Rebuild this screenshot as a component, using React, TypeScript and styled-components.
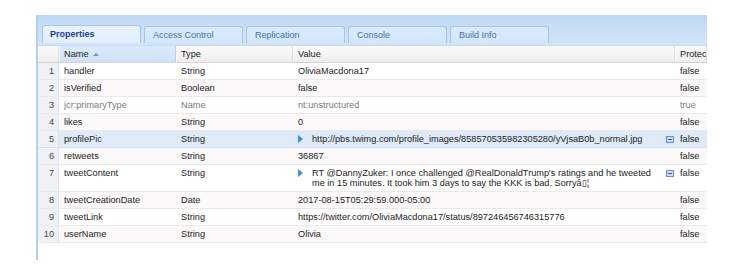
import React from 'react';
import styled, { createGlobalStyle, css } from 'styled-components';

const GlobalStyle = createGlobalStyle`
  html, body {
    margin: 0;
    padding: 0;
    background: #ffffff;
  }
  body {
    font-family: 'Liberation Sans', Arial, sans-serif;
  }
`;

const COLS = '21px 117px 117px 382px 1fr';

const Page = styled.div`
  padding: 15px 0 0 36px;
`;

const Panel = styled.div`
  width: 671px;
  height: 245px;
  border-left: 2px solid #b3cfef;
  box-sizing: border-box;
  overflow: hidden;
  display: flex;
  flex-direction: column;
`;

const TabStrip = styled.div`
  height: 31px;
  box-sizing: border-box;
  display: flex;
  align-items: flex-end;
  gap: 3px;
  padding: 0 0 2px 4px;
  background: linear-gradient(#bcd5f3 0, #c7dcf5 9px, #d3e4f8 100%);
  border-bottom: 1px solid #c6dcf6;
`;

const Tab = styled.div<{ $active?: boolean }>`
  width: 99px;
  height: 17px;
  box-sizing: border-box;
  padding-left: 8px;
  border: 1px solid #a3c4ec;
  border-bottom: none;
  border-radius: 3px 3px 0 0;
  background: linear-gradient(#dbebfc, #d3e6fb);
  color: #4571ac;
  font-size: 9px;
  line-height: 16px;
  white-space: nowrap;
  ${({ $active }) =>
    $active &&
    css`
      height: 18px;
      padding-left: 7px;
      background: linear-gradient(#eaf4fe, #e1eefd);
      color: #15428b;
      font-weight: bold;
      line-height: 17px;
    `}
`;

const Header = styled.div`
  display: grid;
  grid-template-columns: ${COLS};
  height: 17px;
  box-sizing: border-box;
  background: linear-gradient(#fbfbfb, #ededee);
  border-bottom: 1px solid #dccfcf;
`;

const HeadCell = styled.div<{ $sorted?: boolean }>`
  display: flex;
  align-items: center;
  gap: 4px;
  padding-left: 5px;
  border-right: 1px solid #dcdcdc;
  box-shadow: inset 1px 0 0 #ffffff;
  color: #222;
  font-size: 9.2px;
  white-space: nowrap;
  overflow: hidden;
  ${({ $sorted }) =>
    $sorted &&
    css`
      background: linear-gradient(#dcebfb, #cfe3f9);
      border-right-color: #b9d3f1;
    `}
`;

const SortArrow = styled.span`
  width: 0;
  height: 0;
  border-left: 3px solid transparent;
  border-right: 3px solid transparent;
  border-bottom: 3px solid #6f95c8;
`;

const Row = styled.div<{ $alt?: boolean; $selected?: boolean }>`
  display: grid;
  grid-template-columns: ${COLS};
  border-bottom: 1px solid #ebe8e8;
  background: ${({ $alt }) => ($alt ? '#faf8f8' : '#ffffff')};
  ${({ $selected }) =>
    $selected &&
    css`
      background: #dfeaf8;
      border-bottom-color: #d3e1f3;
    `}
`;

const NumCell = styled.div`
  padding: 3px 4px 3px 0;
  text-align: right;
  line-height: 10px;
  font-size: 9.2px;
  color: #444;
  background: #eef1f5;
  border-right: 1px solid #e0e4ea;
`;

const Cell = styled.div<{ $dim?: boolean }>`
  padding: 3px 4px 3px 5px;
  line-height: 10px;
  font-size: 9.2px;
  color: ${({ $dim }) => ($dim ? '#7a7a7a' : '#222')};
  white-space: nowrap;
  overflow: hidden;
`;

const ValueCell = styled(Cell)`
  display: flex;
  align-items: flex-start;
  padding-right: 1px;
  white-space: normal;
`;

const Expander = styled.span`
  flex: none;
  width: 0;
  height: 0;
  margin: 1px 9px 0 0;
  border-top: 4px solid transparent;
  border-bottom: 4px solid transparent;
  border-left: 5px solid #3a8fdc;
`;

const ValueText = styled.span`
  flex: 1;
`;

const Collapse = styled.svg`
  flex: none;
  margin: 2px 0 0 6px;
`;

type Prop = {
  name: string;
  type: string;
  value: string;
  prot: string;
  dim?: boolean;
  expand?: boolean;
  selected?: boolean;
};

const props: Prop[] = [
  { name: 'handler', type: 'String', value: 'OliviaMacdona17', prot: 'false' },
  { name: 'isVerified', type: 'Boolean', value: 'false', prot: 'false' },
  { name: 'jcr:primaryType', type: 'Name', value: 'nt:unstructured', prot: 'true', dim: true },
  { name: 'likes', type: 'String', value: '0', prot: 'false' },
  {
    name: 'profilePic',
    type: 'String',
    value: 'http://pbs.twimg.com/profile_images/858570535982305280/yVjsaB0b_normal.jpg',
    prot: 'false',
    expand: true,
    selected: true,
  },
  { name: 'retweets', type: 'String', value: '36867', prot: 'false' },
  {
    name: 'tweetContent',
    type: 'String',
    value:
      "RT @DannyZuker: I once challenged @RealDonaldTrump's ratings and he tweeted me in 15 minutes. It took him 3 days to say the KKK is bad. Sorry\u00e2\u25af\u00a6",
    prot: 'false',
    expand: true,
  },
  { name: 'tweetCreationDate', type: 'Date', value: '2017-08-15T05:29:59.000-05:00', prot: 'false' },
  { name: 'tweetLink', type: 'String', value: 'https://twitter.com/OliviaMacdona17/status/897246456746315776', prot: 'false' },
  { name: 'userName', type: 'String', value: 'Olivia', prot: 'false' },
];

const CollapseIcon = () => (
  <Collapse width="8" height="7" viewBox="0 0 8 7">
    <rect x="0.5" y="0.5" width="7" height="6" fill="#c9dcf3" stroke="#6e8fbd" />
    <rect x="2" y="3" width="4" height="1" fill="#2f5a96" />
  </Collapse>
);

export default function App() {
  const tabs = ['Properties', 'Access Control', 'Replication', 'Console', 'Build Info'];
  return (
    <>
      <GlobalStyle />
      <Page>
        <Panel>
          <TabStrip>
            {tabs.map((t, i) => (
              <Tab key={t} $active={i === 0}>
                {t}
              </Tab>
            ))}
          </TabStrip>
          <Header>
            <HeadCell />
            <HeadCell $sorted>
              Name <SortArrow />
            </HeadCell>
            <HeadCell>Type</HeadCell>
            <HeadCell>Value</HeadCell>
            <HeadCell>Protected</HeadCell>
          </Header>
          {props.map((p, i) => (
            <Row key={p.name} $alt={i % 2 === 1} $selected={p.selected}>
              <NumCell>{i + 1}</NumCell>
              <Cell $dim={p.dim}>{p.name}</Cell>
              <Cell $dim={p.dim}>{p.type}</Cell>
              {p.expand ? (
                <ValueCell>
                  <Expander />
                  <ValueText>{p.value}</ValueText>
                  <CollapseIcon />
                </ValueCell>
              ) : (
                <Cell $dim={p.dim}>{p.value}</Cell>
              )}
              <Cell $dim={p.dim}>{p.prot}</Cell>
            </Row>
          ))}
        </Panel>
      </Page>
    </>
  );
}
